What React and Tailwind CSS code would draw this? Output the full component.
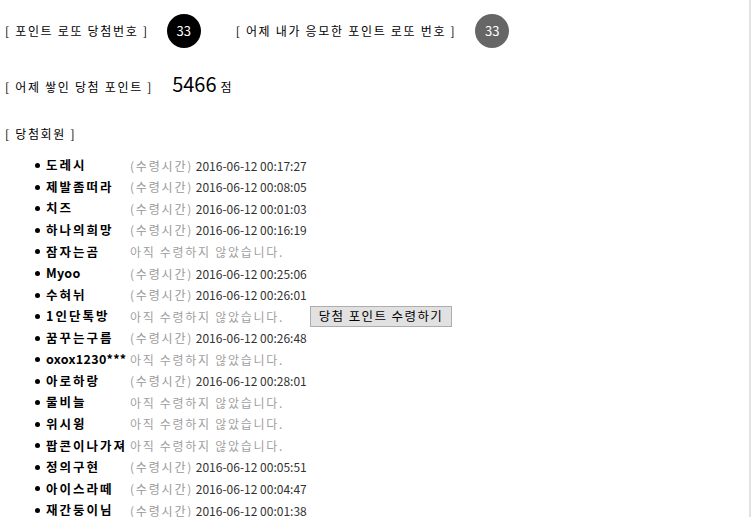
import React from "react";

const winners = [
  { name: "도레시", time: "2016-06-12 00:17:27" },
  { name: "제발좀떠라", time: "2016-06-12 00:08:05" },
  { name: "치즈", time: "2016-06-12 00:01:03" },
  { name: "하나의희망", time: "2016-06-12 00:16:19" },
  { name: "잠자는곰", time: null },
  { name: "Myoo", time: "2016-06-12 00:25:06", latin: true },
  { name: "수혀뉘", time: "2016-06-12 00:26:01" },
  { name: "1인단톡방", time: null, me: true },
  { name: "꿈꾸는구름", time: "2016-06-12 00:26:48" },
  { name: "oxox1230***", time: null, latin: true },
  { name: "아로하랑", time: "2016-06-12 00:28:01" },
  { name: "물비늘", time: null },
  { name: "위시윙", time: null },
  { name: "팝콘이나가져", time: null },
  { name: "정의구현", time: "2016-06-12 00:05:51" },
  { name: "아이스라떼", time: "2016-06-12 00:04:47" },
  { name: "재간둥이님", time: "2016-06-12 00:01:38" },
];

const font = { fontFamily: '"Noto Sans CJK KR", "Noto Sans", sans-serif' };

function Ball({ dark }) {
  return (
    <span
      className={`flex items-center justify-center w-[34px] h-[34px] rounded-full text-white text-[13px] ${
        dark ? "bg-black" : "bg-[#666666]"
      }`}
    >
      33
    </span>
  );
}

export default function App() {
  return (
    <div
      className="h-[517px] w-[751px] overflow-hidden border-r-2 border-[#e2e2e2] bg-white text-[12px] text-black"
      style={font}
    >
      <div className="pl-[5px] pt-[14px]">
        {/* 당첨번호 */}
        <div className="flex items-center h-[34px]">
          <span className="tracking-[1.7px]">[ 포인트 로또 당첨번호 ]</span>
          <span className="ml-[18px]">
            <Ball dark />
          </span>
          <span className="ml-[35px] tracking-[1.7px]">
            [ 어제 내가 응모한 포인트 로또 번호 ]
          </span>
          <span className="ml-[19px]">
            <Ball />
          </span>
        </div>

        {/* 포인트 */}
        <div className="flex items-baseline mt-[26px] h-[30px]">
          <span className="tracking-[1.7px]">[ 어제 쌓인 당첨 포인트 ]</span>
          <span className="ml-[19px] text-[20px] leading-none">5466</span>
          <span className="ml-[4px]">점</span>
        </div>

        {/* 회원 */}
        <div className="mt-[21px] tracking-[1.7px]">[ 당첨회원 ]</div>

        <ul className="mt-[12px] pl-[30px]">
          {winners.map((w) => (
            <li key={w.name} className="flex items-center h-[21.56px]">
              <span className="w-[5px] h-[5px] rounded-full bg-black mr-[6px]" />
              <span
                className={`w-[84px] font-bold text-[12.5px] whitespace-nowrap ${
                  w.latin ? "tracking-[0.3px]" : "tracking-[2px]"
                }`}
              >
                {w.name}
              </span>
              {w.time ? (
                <span>
                  <span className="text-[#999999] tracking-[1.8px]">(수령시간)</span>{" "}
                  <span className="text-[#333333]">{w.time}</span>
                </span>
              ) : (
                <span className="text-[#a0a0a0] tracking-[1.7px]">
                  아직 수령하지 않았습니다.
                </span>
              )}
              {w.me && (
                <button className="ml-[26px] h-[21px] w-[142px] border border-[#adadad] bg-[#e1e1e1] text-[12.5px] tracking-[1.4px] text-black">
                  당첨 포인트 수령하기
                </button>
              )}
            </li>
          ))}
        </ul>
      </div>
    </div>
  );
}
